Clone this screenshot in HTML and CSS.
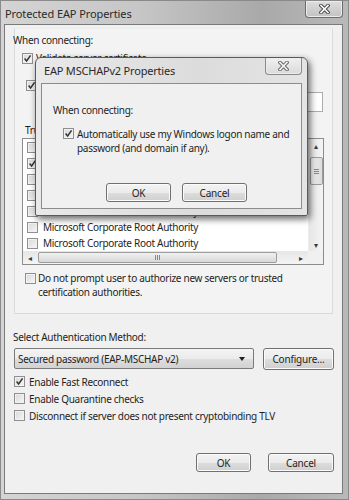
FILE: index.html
```html
<!DOCTYPE html>
<html lang="en">
  <head>
    <meta charset="UTF-8" />
    <meta name="viewport" content="width=device-width, initial-scale=1.0" />
    <title>Protected EAP Properties</title>
    <link rel="stylesheet" href="styles.css">
  </head>
  <body>
    <div class="window">
      <div class="titlebar">
        <span class="title">Protected EAP Properties</span>
        <span class="close-btn">
          <svg width="11" height="10" viewBox="0 0 11 10">
            <path d="M2 1.5 L9 8.5 M9 1.5 L2 8.5" stroke="#4a4a4a" stroke-width="3.6" stroke-linecap="square" />
            <path d="M2 1.5 L9 8.5 M9 1.5 L2 8.5" stroke="#ffffff" stroke-width="1.6" stroke-linecap="square" />
          </svg>
        </span>
      </div>
      <div class="client">
        <div class="panel">
          <div class="label when">When connecting:</div>
          <div class="check-row validate">
            <span class="cb checked"><svg viewBox="0 0 9 9"><path d="M1.6 4.6 L3.6 7 L7.6 1.4" /></svg></span>
            <span>Validate server certificate</span>
          </div>
          <div class="check-row servers">
            <span class="cb checked"><svg viewBox="0 0 9 9"><path d="M1.6 4.6 L3.6 7 L7.6 1.4" /></svg></span>
            <span>Connect to these servers:</span>
          </div>
          <div class="text-box"></div>
          <div class="label trusted">Trusted Root Certification Authorities:</div>
          <div class="listbox">
            <div class="list-rows">
              <div class="list-row"><span class="cb"></span><span>Class 3 Public Primary Certification Authority</span></div>
              <div class="list-row"><span class="cb checked"><svg viewBox="0 0 9 9"><path d="M1.6 4.6 L3.6 7 L7.6 1.4" /></svg></span><span>Equifax Secure Certificate Authority</span></div>
              <div class="list-row"><span class="cb"></span><span>GTE CyberTrust Global Root</span></div>
              <div class="list-row"><span class="cb"></span><span>Microsoft Root Authority</span></div>
              <div class="list-row"><span class="cb"></span><span>Microsoft Root Certificate Authority</span></div>
              <div class="list-row"><span class="cb"></span><span>Microsoft Corporate Root Authority</span></div>
              <div class="list-row"><span class="cb"></span><span>Microsoft Corporate Root Authority</span></div>
            </div>
            <div class="vscroll">
              <span class="arrow">&#9652;</span>
              <span class="vthumb"><span class="grip-h"></span></span>
              <span class="vspace"></span>
              <span class="arrow">&#9662;</span>
            </div>
            <div class="hscroll">
              <span class="arrow">&#9666;</span>
              <span class="hthumb"><span class="grip-v"></span></span>
              <span class="hspace"></span>
              <span class="arrow">&#9656;</span>
            </div>
            <div class="corner"></div>
          </div>
          <div class="check-row prompt">
            <span class="cb"></span>
            <span>Do not prompt user to authorize new servers or trusted<br />certification authorities.</span>
          </div>
        </div>

        <div class="label method">Select Authentication Method:</div>
        <div class="method-row">
          <div class="dropdown">
            <span>Secured password (EAP-MSCHAP v2)</span>
            <span class="drop-arrow"></span>
          </div>
          <button class="btn configure">Configure...</button>
        </div>
        <div class="options">
          <div class="check-row opt">
            <span class="cb checked"><svg viewBox="0 0 9 9"><path d="M1.6 4.6 L3.6 7 L7.6 1.4" /></svg></span>
            <span>Enable Fast Reconnect</span>
          </div>
          <div class="check-row opt">
            <span class="cb"></span>
            <span>Enable Quarantine checks</span>
          </div>
          <div class="check-row opt">
            <span class="cb"></span>
            <span>Disconnect if server does not present cryptobinding TLV</span>
          </div>
        </div>
        <div class="footer">
          <button class="btn ok">OK</button>
          <button class="btn cancel">Cancel</button>
        </div>
      </div>

      <!-- child dialog on top of the main one -->
      <div class="popup">
        <div class="popup-title">
          <span class="title">EAP MSCHAPv2 Properties</span>
          <span class="close-btn small">
            <svg width="11" height="10" viewBox="0 0 11 10">
              <path d="M2 1.5 L9 8.5 M9 1.5 L2 8.5" stroke="#6a6a6a" stroke-width="3.6" stroke-linecap="square" />
              <path d="M2 1.5 L9 8.5 M9 1.5 L2 8.5" stroke="#f4f4f4" stroke-width="1.6" stroke-linecap="square" />
            </svg>
          </span>
        </div>
        <div class="popup-client">
          <div class="label">When connecting:</div>
          <div class="check-row auto">
            <span class="cb checked"><svg viewBox="0 0 9 9"><path d="M1.6 4.6 L3.6 7 L7.6 1.4" /></svg></span>
            <span>Automatically use my Windows logon name and<br />password (and domain if any).</span>
          </div>
          <div class="popup-buttons">
            <button class="btn">OK</button>
            <button class="btn">Cancel</button>
          </div>
        </div>
      </div>
    </div>
  </body>
</html>
```

FILE: styles.css
```css
* {
  padding: 0;
  margin: 0;
  box-sizing: border-box;
}
body {
  font-family: "Noto Sans", "Open Sans", sans-serif;
  font-size: 10px;
  letter-spacing: -0.3px;
  color: #1e1e1e;
  background: #bdbdbd;
}
.window {
  position: relative;
  width: 349px;
  height: 500px;
  display: flex;
  flex-direction: column;
  background: linear-gradient(90deg, #d4d4d4 0%, #c6c6c6 40%, #a9a9a9 75%, #b9b9b9 100%);
  border: 1px solid #8a8a8a;
}
.titlebar {
  height: 23px;
  display: flex;
  align-items: flex-start;
  justify-content: space-between;
}
.titlebar .title {
  margin: 5px 0 0 4px;
  font-size: 11px;
  letter-spacing: -0.1px;
  color: #2a2a2a;
}
.close-btn {
  width: 38px;
  height: 17px;
  margin-right: 5px;
  display: flex;
  align-items: center;
  justify-content: center;
  border: 1px solid #6c6c6c;
  border-top: none;
  border-radius: 0 0 4px 4px;
  background: linear-gradient(#dedede, #c2c2c2);
  box-shadow: inset 0 0 0 1px #ececec;
}
.client {
  flex: 1;
  margin: 0 5px 5px 3px;
  border: 1px solid #7a7a7a;
  background: #f0f0f0;
  display: flex;
  flex-direction: column;
}
.panel {
  margin: 3px 0 0 9px;
  width: 319px;
  height: 286px;
  border: 1px solid #dadada;
  border-top-color: #ececec;
  background: #f3f3f3;
  display: flex;
  flex-direction: column;
}
.label {
  line-height: 14px;
  white-space: nowrap;
}
.when {
  margin: 4px 0 0 -2px;
}
.check-row {
  display: flex;
  align-items: center;
  gap: 3px;
  line-height: 14px;
  white-space: nowrap;
}
.validate {
  margin: 4px 0 0 7px;
}
.servers {
  margin: 13px 0 0 11px;
}
.text-box {
  margin: 0 0 0 23px;
  width: 285px;
  height: 20px;
  border: 1px solid #acacac;
  background: #ffffff;
}
.trusted {
  margin: 11px 0 0 10px;
}
.cb {
  width: 11px;
  height: 11px;
  flex: none;
  border: 1px solid #8f8f8f;
  background: linear-gradient(135deg, #d8d8d8, #f7f7f7);
  box-shadow: inset 0 0 0 1px #f2f2f2;
  display: flex;
}
.cb svg {
  width: 9px;
  height: 9px;
  fill: none;
  stroke: #333333;
  stroke-width: 1.5;
}
.listbox {
  margin: 1px 0 0 7px;
  width: 302px;
  height: 127px;
  border: 1px solid #8c8c8c;
  background: #ffffff;
  display: grid;
  grid-template-columns: 1fr 15px;
  grid-template-rows: 1fr 13px;
  overflow: hidden;
}
.list-rows {
  padding: 0 0 0 4px;
  overflow: hidden;
}
.list-row {
  height: 16px;
  display: flex;
  align-items: center;
  gap: 5px;
  white-space: nowrap;
}
.vscroll {
  display: flex;
  flex-direction: column;
  align-items: center;
  background: linear-gradient(90deg, #e6e6e6, #f4f4f4);
  border-left: 1px solid #ededed;
}
.hscroll {
  display: flex;
  align-items: center;
  background: linear-gradient(#e6e6e6, #f4f4f4);
}
.corner {
  background: #f0f0f0;
}
.arrow {
  width: 14px;
  height: 13px;
  line-height: 13px;
  text-align: center;
  font-size: 8px;
  color: #3a3a3a;
  flex: none;
}
.vthumb {
  width: 13px;
  height: 28px;
  margin-top: 5px;
  border: 1px solid #9c9c9c;
  border-radius: 2px;
  background: linear-gradient(90deg, #f1f1f1, #dcdcdc);
  display: flex;
  align-items: center;
  justify-content: center;
}
.vspace {
  flex: 1;
}
.grip-h {
  width: 5px;
  height: 5px;
  border-top: 1px solid #888;
  border-bottom: 1px solid #888;
}
.grip-h::after {
  content: "";
  display: block;
  margin-top: 1px;
  border-top: 1px solid #888;
}
.hthumb {
  width: 239px;
  height: 11px;
  margin-left: 1px;
  border: 1px solid #9c9c9c;
  border-radius: 2px;
  background: linear-gradient(#f1f1f1, #d8d8d8);
  display: flex;
  align-items: center;
  justify-content: center;
}
.hspace {
  flex: 1;
}
.grip-v {
  width: 5px;
  height: 5px;
  border-left: 1px solid #888;
  border-right: 1px solid #888;
}
.grip-v::after {
  content: "";
  display: block;
  height: 100%;
  margin-left: 1px;
  border-left: 1px solid #888;
}
.prompt {
  margin: 6px 0 0 10px;
  align-items: flex-start;
  gap: 2px;
}
.prompt .cb {
  margin-top: 2px;
}
.method {
  margin: 16px 0 0 8px;
}
.method-row {
  margin: 4px 0 0 9px;
  display: flex;
  gap: 9px;
}
.dropdown {
  width: 240px;
  height: 21px;
  padding: 0 8px 0 3px;
  border: 1px solid #7a7a7a;
  border-radius: 2px;
  background: linear-gradient(#f4f4f4 0%, #ebebeb 50%, #dedede 51%, #d2d2d2 100%);
  display: flex;
  align-items: center;
  justify-content: space-between;
  white-space: nowrap;
}
.drop-arrow {
  width: 0;
  height: 0;
  border-left: 3px solid transparent;
  border-right: 3px solid transparent;
  border-top: 4px solid #1e1e1e;
}
.btn {
  font-family: inherit;
  font-size: 10px;
  letter-spacing: -0.2px;
  color: #1e1e1e;
  border: 1px solid #707070;
  border-radius: 3px;
  background: linear-gradient(#f3f3f3 0%, #ebebeb 50%, #dddddd 51%, #cfcfcf 100%);
  box-shadow: inset 0 0 0 1px #fbfbfb;
}
.configure {
  width: 71px;
  height: 22px;
}
.options {
  margin: 3px 0 0 9px;
}
.opt {
  height: 17px;
  gap: 4px;
}
.footer {
  margin: 29px 8px 0 0;
  display: flex;
  justify-content: flex-end;
  gap: 17px;
}
.ok {
  width: 55px;
  height: 19px;
}
.cancel {
  width: 66px;
  height: 19px;
}

.popup {
  position: absolute;
  left: 34px;
  top: 56px;
  width: 273px;
  height: 159px;
  border: 1px solid #5a5a5a;
  border-radius: 6px 6px 2px 2px;
  background: linear-gradient(90deg, #e9e9e9, #dcdcdc 60%, #e4e4e4);
  box-shadow: 2px 3px 7px rgba(0, 0, 0, 0.6);
  display: flex;
  flex-direction: column;
}
.popup-title {
  height: 25px;
  display: flex;
  justify-content: space-between;
  align-items: flex-start;
}
.popup-title .title {
  margin: 5px 0 0 8px;
  font-size: 11px;
  letter-spacing: -0.2px;
  color: #2a2a2a;
}
.close-btn.small {
  width: 37px;
  margin-right: 5px;
  background: linear-gradient(#f0f0f0, #dadada);
  border-color: #8a8a8a;
}
.popup-client {
  margin: 0 5px 6px 5px;
  flex: 1;
  border: 1px solid #8c8c8c;
  background: #f0f0f0;
  padding: 19px 0 0 11px;
}
.auto {
  margin: 10px 0 0 10px;
  align-items: flex-start;
}
.auto .cb {
  margin-top: 1px;
}
.popup-buttons {
  margin: 28px 0 0 53px;
  display: flex;
  gap: 11px;
}
.popup-buttons .btn {
  width: 65px;
  height: 19px;
}
```
